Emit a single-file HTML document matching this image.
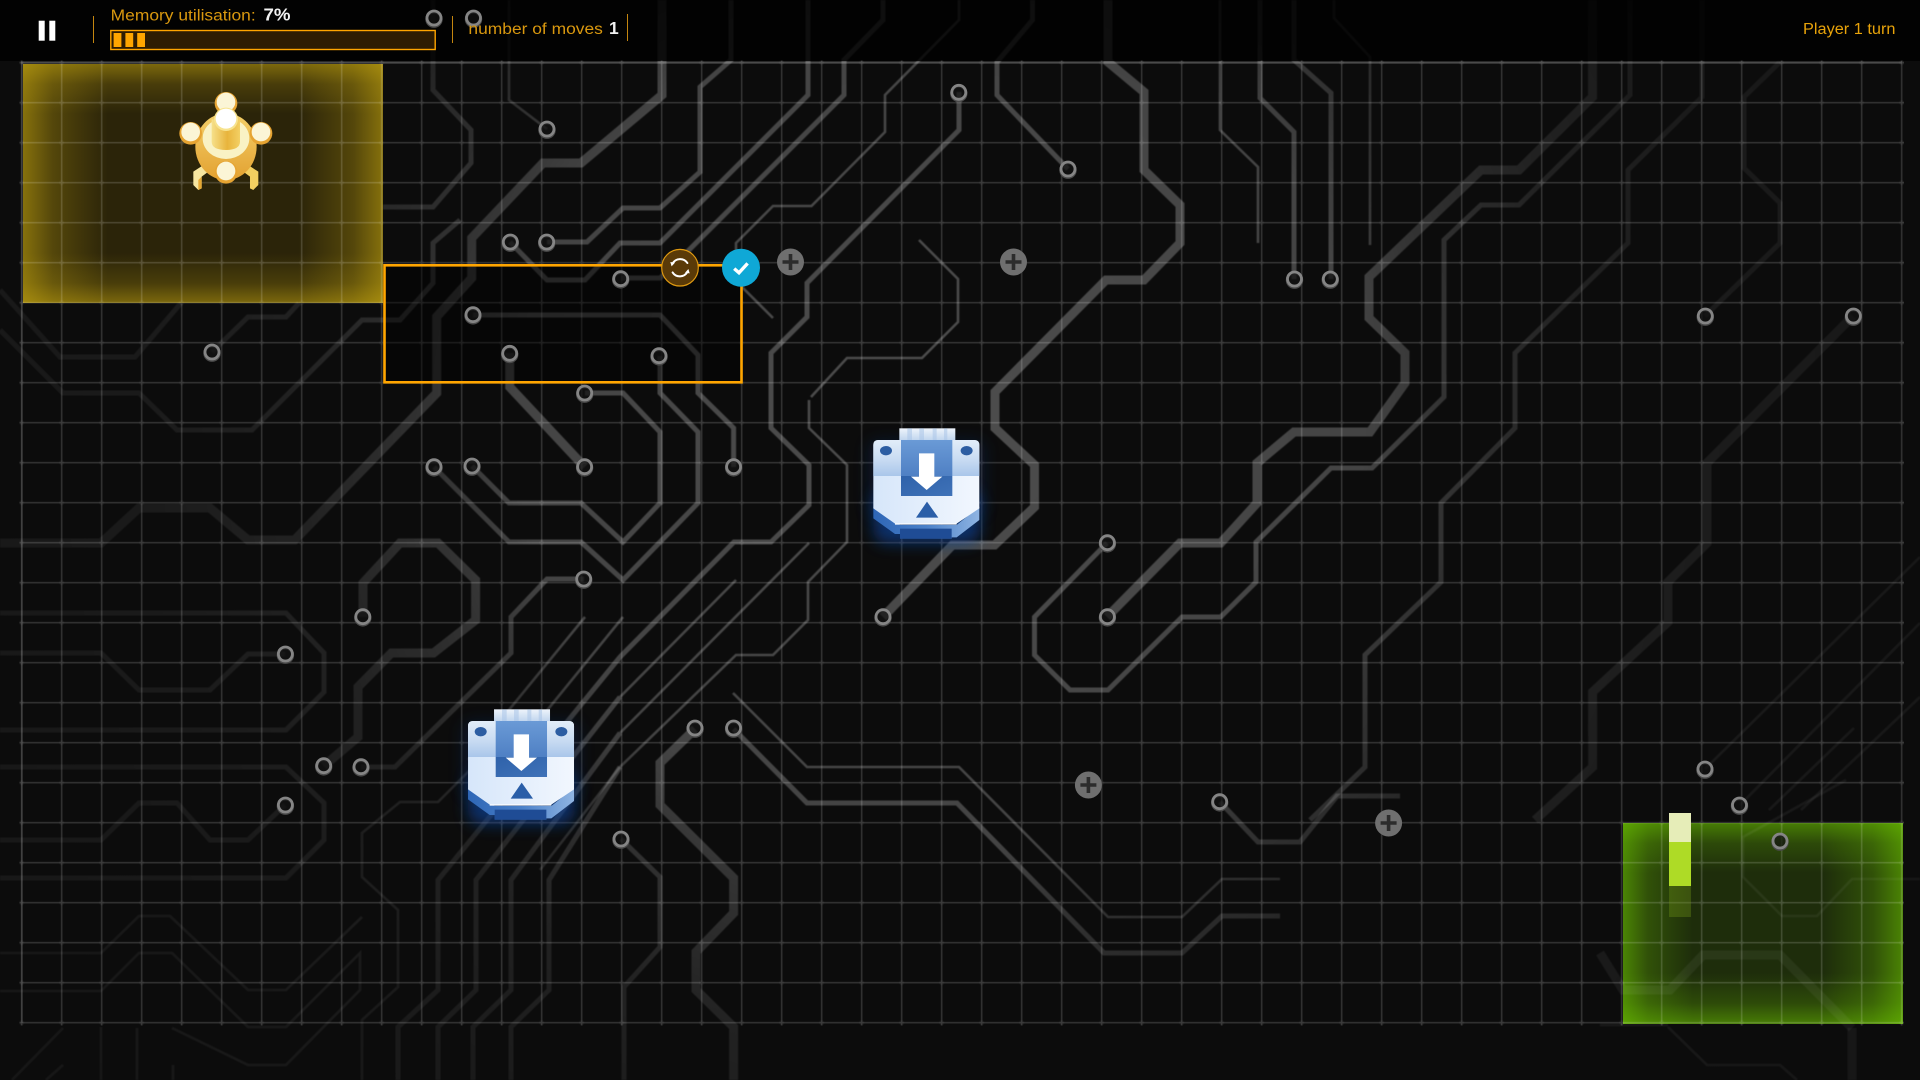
<!DOCTYPE html>
<html><head><meta charset="utf-8"><title>Memory grid</title>
<style>
html,body{margin:0;padding:0;background:#0c0c0c;width:1920px;height:1080px;overflow:hidden}
svg{position:absolute;left:0;top:0;display:block}
.zone{position:absolute}
#zy{left:23px;top:64px;width:360px;height:239px;background:
linear-gradient(to right,rgba(190,160,15,.62) 0,rgba(190,160,15,.28) 30px,rgba(190,160,15,0) 85px,rgba(190,160,15,0) 275px,rgba(190,160,15,.28) 330px,rgba(190,160,15,.62) 100%),
linear-gradient(to bottom,rgba(190,160,15,.55) 0,rgba(190,160,15,.2) 20px,rgba(190,160,15,0) 50px,rgba(190,160,15,0) 189px,rgba(190,160,15,.2) 219px,rgba(190,160,15,.55) 100%),#2b2409}
#zg{left:1623px;top:823px;width:280px;height:201px;background:
linear-gradient(to right,rgba(105,190,0,.6) 0,rgba(105,190,0,.25) 25px,rgba(105,190,0,0) 70px,rgba(105,190,0,0) 200px,rgba(105,190,0,.25) 250px,rgba(105,190,0,.6) 100%),
linear-gradient(to bottom,rgba(105,190,0,.55) 0,rgba(105,190,0,.2) 20px,rgba(105,190,0,0) 50px,rgba(105,190,0,0) 150px,rgba(105,190,0,.2) 180px,rgba(105,190,0,.55) 100%),#1e2d0b}
text{font-family:"Liberation Sans",sans-serif}
</style></head><body>
<div class="zone" id="zy"></div>
<div class="zone" id="zg"></div>
<svg width="1920" height="1080" viewBox="0 0 1920 1080" xmlns="http://www.w3.org/2000/svg">
<defs>
<radialGradient id="tr" gradientUnits="userSpaceOnUse" cx="940" cy="420" r="1150">
<stop offset="0" stop-color="#fff" stop-opacity=".27"/>
<stop offset=".37" stop-color="#fff" stop-opacity=".23"/>
<stop offset=".44" stop-color="#fff" stop-opacity=".16"/>
<stop offset=".56" stop-color="#fff" stop-opacity=".09"/>
<stop offset=".7" stop-color="#fff" stop-opacity=".06"/>
<stop offset="1" stop-color="#fff" stop-opacity=".045"/>
</radialGradient>
<pattern id="gp" patternUnits="userSpaceOnUse" x="1.7" y="42.7" width="40" height="40">
<path d="M20 0V40M0 20H40" stroke="#fff" stroke-opacity=".165" stroke-width="1.5" fill="none"/>
<circle cx="20" cy="20" r="2.6" fill="#fff" fill-opacity=".04"/>
</pattern>
<linearGradient id="bodyT" x1="0" y1="0" x2="0" y2="1"><stop offset="0" stop-color="#e2edf9"/><stop offset=".55" stop-color="#c8dbf2"/><stop offset="1" stop-color="#a9c6ea"/></linearGradient>
<linearGradient id="bodyB" x1="0" y1="0" x2="1" y2="0"><stop offset="0" stop-color="#d6e6fa"/><stop offset="1" stop-color="#f2f7fe"/></linearGradient>
<linearGradient id="sq1" x1="0" y1="0" x2="0" y2="1"><stop offset="0" stop-color="#6a9ad6"/><stop offset="1" stop-color="#4f80c4"/></linearGradient>
<linearGradient id="sq2" x1="0" y1="0" x2="1" y2="1"><stop offset="0" stop-color="#2f62aa"/><stop offset="1" stop-color="#3f72b8"/></linearGradient>
<linearGradient id="sd" x1="0" y1="0" x2="1" y2="0"><stop offset="0" stop-color="#2e66b6"/><stop offset=".5" stop-color="#4a80c8"/><stop offset="1" stop-color="#8fb4e2"/></linearGradient>
<linearGradient id="tb" x1="0" y1="0" x2="0" y2="1"><stop offset="0" stop-color="#eef4fb"/><stop offset="1" stop-color="#bfd4ee"/></linearGradient>
<linearGradient id="cy" x1="0" y1="0" x2="1" y2="0"><stop offset="0" stop-color="#f6e08a"/><stop offset=".55" stop-color="#e8b43c"/><stop offset="1" stop-color="#f3d064"/></linearGradient>
<linearGradient id="by" x1="0" y1="0" x2="0" y2="1"><stop offset="0" stop-color="#f3cf68"/><stop offset="1" stop-color="#e3a232"/></linearGradient>
<filter id="bl" x="-50%" y="-50%" width="200%" height="200%"><feGaussianBlur stdDeviation="22"/></filter>
<filter id="sf" x="-2%" y="-2%" width="104%" height="104%"><feGaussianBlur stdDeviation=".6"/></filter>
<g id="r"><circle cy="1.2" r="7.2" fill="none" stroke="#4a4a4a" stroke-width="3"/><circle r="7" fill="#131313" fill-opacity=".7" stroke="#858585" stroke-width="2.8"/></g>
<g id="sc"><circle r="13.5" fill="#6f6f6f"/><path d="M-8 0H8M0-8V8" stroke="#2c2c2c" stroke-width="3.6" fill="none"/></g>
<g id="ball"><circle r="34" fill="#e6a432"/><ellipse cy="-4" rx="28" ry="28" fill="#fbf5d6"/></g>
<g id="ico">
<rect x="70" y="240" width="320" height="160" rx="40" fill="#0a48a8" opacity=".6" filter="url(#bl)"/>
<rect x="55" y="90" width="350" height="230" rx="30" fill="#0a2f70" opacity=".3" filter="url(#bl)"/>
<path d="M150 345L70 290V325L135 372H150V386H305V382L320 382L388 330V290L320 345Z" fill="url(#sd)"/>
<rect x="150" y="356" width="155" height="30" fill="#1f4c95"/>
<rect x="148" y="55" width="168" height="37" fill="url(#tb)"/>
<path d="M172 55h14v37h-14zM208 55h14v37h-14zM248 55h12v37h-12zM282 55h10v37h-10z" fill="#a9c5e8" opacity=".55"/>
<path d="M85 90H373Q388 90 388 105V295L320 341H135L70 295V105Q70 90 85 90Z" fill="url(#bodyB)"/>
<path d="M85 90H373Q388 90 388 105V198H70V105Q70 90 85 90Z" fill="url(#bodyT)"/>
<path d="M135 342H320" stroke="#fff" stroke-width="4"/>
<rect x="153" y="90" width="154" height="108" fill="url(#sq1)"/>
<rect x="153" y="198" width="154" height="60" fill="url(#sq2)"/>
<ellipse cx="108" cy="122" rx="18" ry="14" fill="#2c5da2"/>
<ellipse cx="350" cy="122" rx="18" ry="14" fill="#2c5da2"/>
<path d="M207 130H253V200H277L230 240L183 200H207Z" fill="#fff"/>
<path d="M231 275L265 323H198Z" fill="#2a5ea8"/>
</g>
</defs>

<!-- circuit traces -->
<g fill="none" stroke="url(#tr)" stroke-linejoin="miter" filter="url(#sf)">
<g stroke-width="9">
<path d="M1108 0V62L1144 92V170L1180 205V243L1144 280H1106L995 392V428L1034.5 465V507L994.6 545H952.5L883 617"/>
<path d="M1592.5 0V97L1519 170H1481L1369 277V318L1405 353V383L1370 432H1294L1257 463V503L1220.6 543H1180L1107 617"/>
<path d="M1853 316L1707 463V543L1668 582V622L1592.6 692V767L1535 820"/>
<path d="M695 729L660 763V805L733.6 878V913L696 952V990L733.6 1027V1080"/>
<path d="M363 617V583L400 543H438L475.6 580V620L433.5 653H391.4L358 687V737L323.7 766"/>
<path d="M509.7 353V387L584.6 467"/>
<path d="M662 0V95L581 163H543L471.7 238V278L436.7 316.7V393L294.6 540H248L210 508H139L101 543H0"/>
<path d="M1852 1028L1780 955H1703L1670 990H1623L1600 953"/>
<path d="M1852 1028V1080"/>
</g>
<g stroke-width="5">
<path d="M959 92V130L807 283V317L771 353V428L809 465V505L771 542H734L620 657L438 880V990L398 1027V1080"/>
<path d="M1630 0V95L1519 205H1481L1444 240V397L1372 468H1331L1256 542V582L1220.6 617H1182L1108 690H1070L1034.5 655V617L1107 543"/>
<path d="M1780 62L1744 97V168L1780 203V243L1705 316"/>
<path d="M1702 0V97L1628 170V243L1515 353V428L1441 503V582L1365 655V767L1310 820"/>
<path d="M1068 169L997 95V62L1032.5 20V0"/>
<path d="M621 278H660L672 267L844 95V60L883 20V0"/>
<path d="M510 242L547 280H585L620 243H660L808 95V0"/>
<path d="M547 242H587L623 208H660L700 172V87L731 60V0"/>
<path d="M473 315H660L698 355V393L733.6 428V467"/>
<path d="M472 466L509 503H581L623 542L660 503V432L623 393H585"/>
<path d="M434 467L509 542H581L623 580L698 503V432L660 393V356"/>
<path d="M584 579H547L511 617V653L395 767H361"/>
<path d="M733.6 729L807 803H957L1104 953H1182L1222 916H1280"/>
<path d="M621 839L660 877V947L624 987V1080"/>
<path d="M1220 802L1258 842H1300L1337 796H1400"/>
<path d="M1294 279V132L1260 98V0"/>
<path d="M1331 279V93L1294 60V0"/>
<path d="M0 613H286L324 653V692L286 730H0"/>
<path d="M0 767H286L324 803V840L286 878H0"/>
<path d="M285 654H248L210 690H139L101 653H0"/>
<path d="M285 805L248 840H210L177 803H139L101 840H0"/>
<path d="M620 697L476 880V990L438 1027V1080"/>
<path d="M620 733L511 880V990L473 1027V1080"/>
<path d="M620 767L549 880V990L511 1027V1080"/>
<path d="M460 220L433 243V283L400 320H362L252 430H177L139 393H63L0 330"/>
<path d="M212 352L248 317H286L299 303"/>
<path d="M433 0V90L471 130V163L433 207H383"/>
<path d="M0 290L60 357H135L181 303"/>
</g>
<g stroke-width="2.6">
<path d="M959 0V20L885 95V132L811.5 206H773L736 243V262"/>
<path d="M811 397L847 358H922L958 322V279L919 240"/>
<path d="M809 400V428L847 465V542L808 582V620L773 655H736L620 767L540 870"/>
<path d="M742 287L773 318"/>
<path d="M1220 0V130L1258 167V243"/>
<path d="M1334 0V18L1370 57V245"/>
<path d="M733 693L807 767H959L1108 917H1182L1222 879H1280"/>
<path d="M736 580L620 697"/>
<path d="M809 543L620 733"/>
<path d="M585 617L468 760"/>
<path d="M623 617L505 762"/>
<path d="M1705 769L1920 557"/>
<path d="M1740 805L1920 623"/>
<path d="M1854 728L1769 810"/>
<path d="M1920 697L1801 810"/>
<path d="M1846 780L1743 837V877L1782 916H1817L1852 879H1920"/>
<path d="M0 953H101L139 916H170L248 990H286L362 917"/>
<path d="M0 991H101L139 953H172L248 1027H286L360 953V990L286 1065H248L172 1028"/>
<path d="M362 1080V1020L398 987V910L362 877V833L400 802H438L500 740"/>
<path d="M1668 1027L1707 1065H1780L1797 1080M1600 1025H1668"/>
<path d="M63 1028L12 1080M63 1065L46 1080M101 1027V1080M137 1028V1080M173 1065V1080"/>
<path d="M547 129L509 100V0"/>
</g>
</g>

<!-- header shade -->
<rect x="0" y="0" width="1920" height="61" fill="#000" fill-opacity=".78"/>

<!-- grid -->
<rect x="19.5" y="60.5" width="1884.5" height="965" fill="url(#gp)"/>
<path d="M21 62.5H1902" stroke="#fff" stroke-opacity=".13" stroke-width="2.6"/>
<path d="M22 62V1023" stroke="#fff" stroke-opacity=".08" stroke-width="2"/>

<!-- selection -->
<rect x="384.5" y="265.3" width="357" height="117" fill="#000" fill-opacity=".45" stroke="#ffa500" stroke-width="2.6"/>

<!-- rings -->
<g>
<use href="#r" x="434" y="18"/><use href="#r" x="473.5" y="18"/><use href="#r" x="547" y="129"/>
<use href="#r" x="510.3" y="242"/><use href="#r" x="546.7" y="242"/><use href="#r" x="620.7" y="278.7"/>
<use href="#r" x="473" y="314.7"/><use href="#r" x="509.7" y="353.3"/><use href="#r" x="659" y="355.7"/>
<use href="#r" x="584.7" y="393"/><use href="#r" x="212" y="352"/><use href="#r" x="434" y="466.7"/>
<use href="#r" x="472" y="466"/><use href="#r" x="584.6" y="466.7"/><use href="#r" x="733.6" y="466.7"/>
<use href="#r" x="583.7" y="579"/><use href="#r" x="362.8" y="616.7"/><use href="#r" x="285.4" y="654"/>
<use href="#r" x="323.7" y="765.7"/><use href="#r" x="361" y="766.7"/><use href="#r" x="285.4" y="805"/>
<use href="#r" x="621" y="839"/><use href="#r" x="695" y="728"/><use href="#r" x="733.6" y="728"/>
<use href="#r" x="883" y="616.7"/><use href="#r" x="1107.4" y="542.7"/><use href="#r" x="1107.4" y="616.7"/>
<use href="#r" x="958.8" y="92.3"/><use href="#r" x="1068" y="169"/><use href="#r" x="1294.5" y="279"/>
<use href="#r" x="1330.3" y="279"/><use href="#r" x="1705.3" y="316"/><use href="#r" x="1853.4" y="316"/>
<use href="#r" x="1705" y="769"/><use href="#r" x="1739.5" y="805"/><use href="#r" x="1219.7" y="801.7"/>
<use href="#r" x="1780" y="841"/>
<use href="#sc" x="790.5" y="262"/><use href="#sc" x="1013.5" y="262"/><use href="#sc" x="1088.4" y="785"/><use href="#sc" x="1388.6" y="823"/>
</g>

<!-- green bar -->
<rect x="1669" y="813" width="22" height="29" fill="#e6edb8"/>
<rect x="1669" y="842" width="22" height="44" fill="#aedb26"/>
<rect x="1669" y="886" width="22" height="31" fill="#7da51c" fill-opacity=".3"/>

<!-- yellow piece -->
<g transform="translate(150 70) scale(.3333)">
<path d="M130 305L165 282L182 300L155 320V355L145 360L130 345Z" fill="#f6e6a0"/>
<path d="M155 320V355L145 360V330Z" fill="#e6a832"/>
<path d="M325 305L290 282L273 300L300 320V355L310 360L325 345Z" fill="#f2cf60"/>
<ellipse cx="228" cy="230" rx="92" ry="100" fill="url(#by)"/>
<use href="#ball" x="228" y="100"/>
<ellipse cx="228" cy="205" rx="70" ry="62" fill="#f9f2c4"/>
<path d="M185 148H270V215Q270 240 228 240Q185 240 185 215Z" fill="url(#cy)"/>
<ellipse cx="228" cy="148" rx="36" ry="35" fill="#f7e38e"/>
<ellipse cx="228" cy="146" rx="31" ry="30" fill="#fff"/>
<use href="#ball" x="122" y="190"/><use href="#ball" x="333" y="190"/><use href="#ball" x="228" y="307"/>
</g>

<!-- blue icons -->
<g transform="translate(850 410) scale(.3333)"><use href="#ico"/></g>
<g transform="translate(444.7 691) scale(.3333)"><use href="#ico"/></g>

<!-- buttons -->
<circle cx="680" cy="267.7" r="18.3" fill="#5a3a08" stroke="#e09a10" stroke-width="1.2"/>
<g fill="none" stroke="#fff" stroke-width="2" stroke-linecap="round">
<path d="M672.6 263.5A8.7 8.7 0 0 1 687.4 263"/>
<path d="M687.4 272A8.7 8.7 0 0 1 672.6 272.4"/>
</g>
<path d="M670.3 262L675 262.6L671.6 266.4ZM689.7 273.4L685 272.8L688.4 269Z" fill="#fff"/>
<circle cx="741" cy="267.7" r="19" fill="#0fa8d6"/>
<path d="M734.2 268.6L739 272.8L747.6 263.4" fill="none" stroke="#fff" stroke-width="3.4"/>

<!-- header -->
<rect x="38.7" y="20.7" width="6" height="20" fill="#fff"/>
<rect x="49.3" y="20.7" width="6" height="20" fill="#fff"/>
<path d="M93.5 16V43M452.5 16V43M627.5 14V41" stroke="#c4860f" stroke-width="1"/>
<rect x="110.8" y="30.5" width="324.4" height="19" fill="#2e1c02" stroke="#ffa500" stroke-width="1.4"/>
<rect x="113.6" y="33" width="7.8" height="14" fill="#ffa500"/>
<rect x="125.4" y="33" width="7.8" height="14" fill="#ffa500"/>
<rect x="137.2" y="33" width="7.8" height="14" fill="#ffa500"/>
<text x="110.7" y="20.7" font-size="15.5" fill="#d9980f" textLength="145" lengthAdjust="spacingAndGlyphs">Memory utilisation:</text>
<text x="263.5" y="20.7" font-size="17.5" font-weight="700" fill="#f2f2f2" textLength="27" lengthAdjust="spacingAndGlyphs">7%</text>
<text x="468.4" y="34" font-size="15.5" fill="#d9980f" textLength="134.5" lengthAdjust="spacingAndGlyphs">number of moves</text>
<text x="609" y="34" font-size="17.5" font-weight="700" fill="#f2f2f2">1</text>
<text x="1803" y="34" font-size="15.5" fill="#e8a30a" textLength="92.5" lengthAdjust="spacingAndGlyphs">Player 1 turn</text>
</svg>
</body></html>
